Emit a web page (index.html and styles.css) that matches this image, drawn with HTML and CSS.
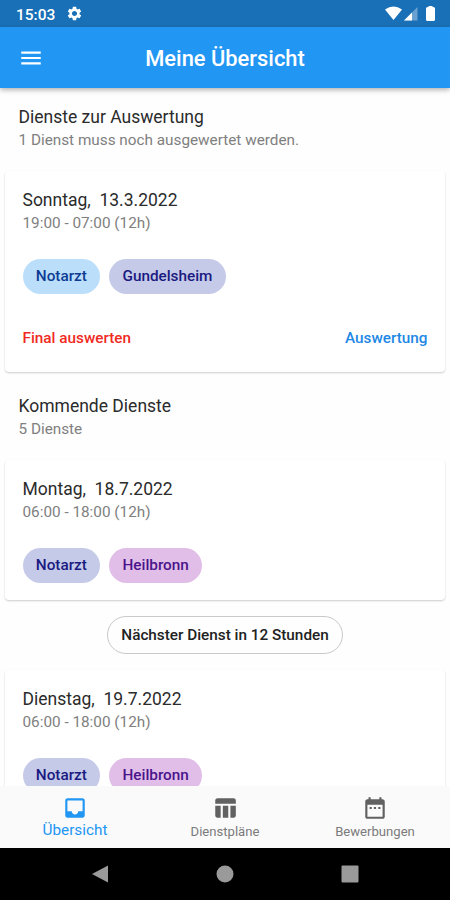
FILE: index.html
```html
<!doctype html>
<html lang="de">

<head>
    <meta charset="utf-8">
    <title>Meine Übersicht</title>
    <meta name="viewport" content="width=device-width,initial-scale=1">
    <link rel="stylesheet" href="styles.css">
</head>

<body>
    <div class="status-bar">
        <span class="time">15:03</span>
        <svg class="gear" viewBox="0 0 24 24"><path d="M19.14 12.94c.04-.3.06-.61.06-.94 0-.32-.02-.64-.07-.94l2.03-1.58c.18-.14.23-.41.12-.61l-1.92-3.32c-.12-.22-.37-.29-.59-.22l-2.39.96c-.5-.38-1.03-.7-1.62-.94l-.36-2.54c-.04-.24-.24-.41-.48-.41h-3.84c-.24 0-.43.17-.47.41l-.36 2.54c-.59.24-1.13.57-1.62.94l-2.39-.96c-.22-.08-.47 0-.59.22L2.74 8.87c-.12.21-.08.47.12.61l2.03 1.58c-.05.3-.09.63-.09.94s.02.64.07.94l-2.03 1.58c-.18.14-.23.41-.12.61l1.92 3.32c.12.22.37.29.59.22l2.39-.96c.5.38 1.03.7 1.62.94l.36 2.54c.05.24.24.41.48.41h3.84c.24 0 .44-.17.47-.41l.36-2.54c.59-.24 1.13-.56 1.62-.94l2.39.96c.22.08.47 0 .59-.22l1.92-3.32c.12-.22.07-.47-.12-.61l-2.01-1.58zM12 15.6c-1.98 0-3.6-1.62-3.6-3.6s1.62-3.6 3.6-3.6 3.6 1.62 3.6 3.6-1.62 3.6-3.6 3.6z"/></svg>
        <svg class="signals" viewBox="0 0 52 18">
            <path d="M1 4.5Q9.500-1.500 18 4.500L9.500 15Z"/>
            <path d="M33.500 2V15.500H20Z" opacity=".35"/>
            <path d="M28 7.500V15.500H20Z"/>
            <path d="M43.500 2H44.500V1H48.500V2H49.500Q51 2 51 3.500V14.500Q51 16 49.500 16H43.500Q42 16 42 14.500V3.500Q42 2 43.500 2Z"/>
        </svg>
    </div>

    <header class="app-bar">
        <svg class="icon" viewBox="0 0 24 24"><path d="M3 18h18v-2H3v2zm0-5h18v-2H3v2zm0-7v2h18V6H3z"/></svg>
        <h1>Meine Übersicht</h1>
    </header>

    <main>
        <div class="section">
            <h2>Dienste zur Auswertung</h2>
            <p>1 Dienst muss noch ausgewertet werden.</p>
        </div>
        <div class="card">
            <h2>Sonntag,&nbsp; 13.3.2022</h2>
            <p>19:00 - 07:00 (12h)</p>
            <div class="chips">
                <span class="chip blue">Notarzt</span>
                <span class="chip indigo">Gundelsheim</span>
            </div>
            <div class="actions">
                <a class="final">Final auswerten</a>
                <a>Auswertung</a>
            </div>
        </div>

        <div class="section upcoming">
            <h2>Kommende Dienste</h2>
            <p>5 Dienste</p>
        </div>
        <div class="card">
            <h2>Montag,&nbsp; 18.7.2022</h2>
            <p>06:00 - 18:00 (12h)</p>
            <div class="chips">
                <span class="chip indigo">Notarzt</span>
                <span class="chip purple">Heilbronn</span>
            </div>
        </div>
        <div class="next">Nächster Dienst in 12 Stunden</div>
        <div class="card">
            <h2>Dienstag,&nbsp; 19.7.2022</h2>
            <p>06:00 - 18:00 (12h)</p>
            <div class="chips">
                <span class="chip indigo">Notarzt</span>
                <span class="chip purple">Heilbronn</span>
            </div>
        </div>
    </main>

    <nav class="tabs">
        <a class="tab active">
            <svg class="icon" viewBox="0 0 24 24"><path d="M19 3H4.990c-1.110 0-1.980.89-1.980 2L3 19c0 1.100.88 2 1.990 2H19c1.100 0 2-.9 2-2V5c0-1.110-.9-2-2-2zm0 12h-4c0 1.660-1.350 3-3 3s-3-1.340-3-3H4.990V5H19v10z"/></svg>
            <span>Übersicht</span>
        </a>
        <a class="tab">
            <svg class="icon" viewBox="0 0 24 24"><path d="M10 10.020h5V21h-5V10.020zM17 21h3c1.100 0 2-.9 2-2v-9h-5v11zm3-18H5c-1.100 0-2 .9-2 2v3h19V5c0-1.100-.9-2-2-2zM3 19c0 1.100.9 2 2 2h3V10H3v9z"/></svg>
            <span>Dienstpläne</span>
        </a>
        <a class="tab">
            <svg class="icon" viewBox="0 0 24 24"><path d="M9 11H7v2h2v-2zm4 0h-2v2h2v-2zm4 0h-2v2h2v-2zm2-7h-1V2h-2v2H8V2H6v2H5c-1.110 0-1.990.9-1.990 2L3 20c0 1.100.89 2 2 2h14c1.100 0 2-.9 2-2V6c0-1.100-.9-2-2-2zm0 16H5V9h14v11z"/></svg>
            <span>Bewerbungen</span>
        </a>
    </nav>

    <div class="system-nav">
        <svg viewBox="0 0 18 18"><path d="M1 9L17 .5V17.500Z"/></svg>
        <svg viewBox="0 0 18 18"><circle cx="9" cy="9" r="8.500"/></svg>
        <svg viewBox="0 0 18 18"><rect x=".5" y=".5" width="17" height="17" rx="1"/></svg>
    </div>
</body>

</html>
```
FILE: styles.css
```css
* {
    box-sizing: border-box;
}

body {
    margin: 0;
    height: 900px;
    display: flex;
    flex-direction: column;
    overflow: hidden;
    background: #fefefe;
    font-family: Roboto, sans-serif;
    color: #2b2b2b;
}

h1, h2, p {
    margin: 0;
    font-weight: 400;
}

svg {
    display: block;
    fill: currentColor;
}

.icon {
    width: 26px;
    height: 26px;
}

.status-bar {
    flex: none;
    height: 27px;
    padding: 0 14px 0 16px;
    display: flex;
    align-items: center;
    background: #1a70b7;
    color: #fff;
}

.time {
    font-size: 15.5px;
    font-weight: 500;
    padding-top: 2px;
    width: 50px;
}

.gear {
    width: 17px;
    height: 17px;
}

.signals {
    width: 52px;
    height: 18px;
    margin-left: auto;
}

/* App bar */
.app-bar {
    flex: none;
    height: 61px;
    padding: 0 18px;
    display: grid;
    grid-template-columns: 26px 1fr 26px;
    align-items: center;
    background: #2196f3;
    color: #fff;
    box-shadow: 0 2px 5px rgba(0, 0, 0, .3);
    z-index: 1;
}

.app-bar h1 {
    font-size: 21.9px;
    font-weight: 500;
    text-align: center;
    padding-top: 1px;
}

/* Content */
main {
    flex: 1;
    min-height: 0;
    overflow: hidden;
    padding: 0 5px;
}

h2 {
    font-size: 17.5px;
    line-height: 24px;
}

p {
    font-size: 15.3px;
    line-height: 23px;
    color: #808080;
}

.section {
    height: 83px;
    padding: 17px 13.5px 0;
}

.upcoming {
    height: 88px;
    padding-top: 22px;
}

.card {
    padding: 17px 17.5px;
    background: #fff;
    border-radius: 4px;
    box-shadow: 0 1px 2px rgba(0, 0, 0, .2);
}

.chips {
    display: flex;
    gap: 9px;
    margin-top: 24px;
}

.chip {
    height: 35px;
    line-height: 35px;
    padding: 0 13.3px;
    border-radius: 18px;
    font-size: 15.3px;
    font-weight: 500;
}

.blue {
    background: #bbdefb;
    color: #0d3c93;
}

.indigo {
    background: #c5cae9;
    color: #1a1a80;
}

.purple {
    background: #e1bee7;
    color: #4a148c;
}

.actions {
    display: flex;
    justify-content: space-between;
    margin-top: 33px;
    padding-bottom: 6px;
    font-size: 15.3px;
    font-weight: 500;
    line-height: 22px;
    color: #1e88e5;
}

.final {
    color: #f02a22;
}

.next {
    width: 236px;
    height: 38px;
    margin: 16px auto;
    border: 1px solid #c9c9c9;
    border-radius: 19px;
    font-size: 15.3px;
    font-weight: 500;
    line-height: 37px;
    text-align: center;
    color: #222;
}

/* Bottom tabs */
.tabs {
    flex: none;
    height: 62px;
    display: flex;
    background: #fafafa;
    color: #616161;
    z-index: 1;
}

.tab {
    flex: 1;
    display: flex;
    flex-direction: column;
    align-items: center;
    padding-top: 9px;
    font-size: 13.1px;
    line-height: 21px;
}

.tab span {
    color: #7b7b7b;
}

.active, .active span {
    color: #2196f3;
}

.active span {
    font-size: 15.3px;
    line-height: 19px;
}

.system-nav {
    flex: none;
    height: 52px;
    padding: 0 91px;
    display: flex;
    align-items: center;
    justify-content: space-between;
    background: #000;
    color: #9a9a9a;
}

.system-nav svg {
    width: 18px;
    height: 18px;
}
```
